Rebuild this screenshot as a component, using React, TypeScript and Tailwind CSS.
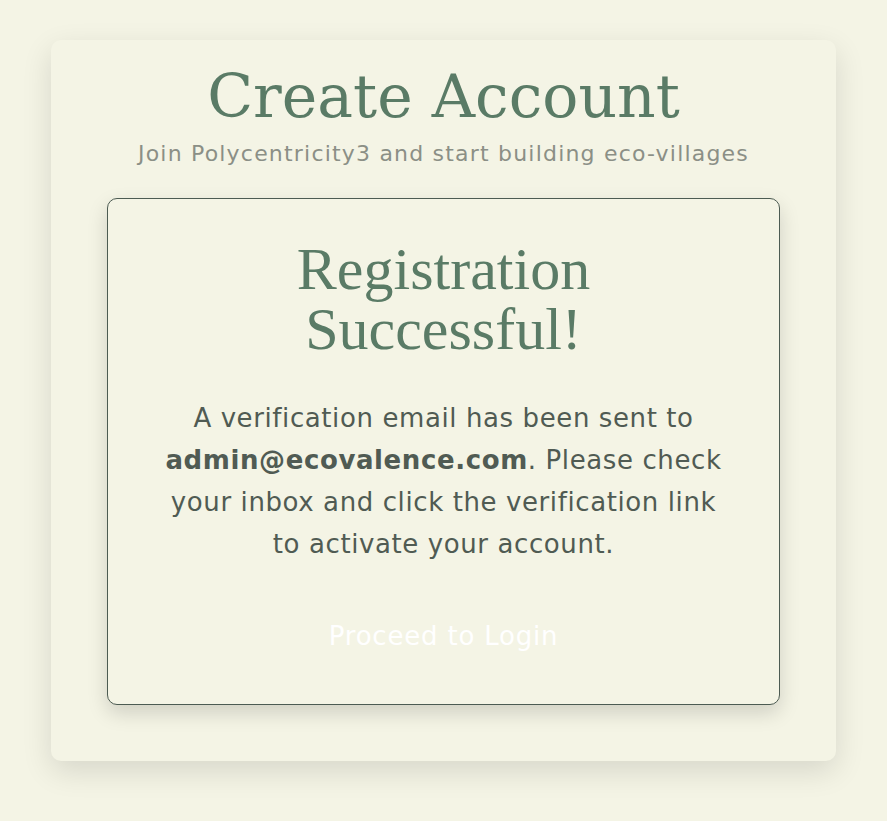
export default function App() {
  return (
    <div className="min-h-[821px] bg-[#f4f4e5] pt-[40px] font-['DejaVu_Sans',sans-serif]">
      <div className="mx-auto w-[785px] rounded-[10px] bg-[#f4f4e5] px-[56px] pt-[18px] pb-[56px] shadow-[0_10px_30px_rgba(0,0,0,0.12)]">
        {/* Header */}
        <h1 className="text-center font-['DejaVu_Serif',serif] text-[60px] leading-[76px] text-[#5a7b66]">
          Create Account
        </h1>
        <p className="mt-[5px] text-center text-[22px] leading-[30px] tracking-[1.2px] text-[#8b8f86]">
          Join Polycentricity3 and start building eco-villages
        </p>

        {/* Success card */}
        <div className="mt-[29px] rounded-[10px] border border-[#4c5b52] bg-[#f4f4e5] px-[40px] pt-[40px] pb-[41px] text-center shadow-[0_8px_20px_rgba(0,0,0,0.15)]">
          <h2 className="font-['Liberation_Serif',serif] text-[60px] leading-[60px] text-[#5a7b66]">
            Registration
            <br />
            Successful!
          </h2>
          <p className="mt-[38px] text-[26px] leading-[42px] tracking-[0.6px] text-[#505b53]">
            A verification email has been sent to
            <br />
            <strong className="font-bold">admin@ecovalence.com</strong>. Please check
            <br />
            your inbox and click the verification link
            <br />
            to activate your account.
          </p>
          <button className="mt-[44px] px-6 py-3 text-[26px] leading-[30px] tracking-[0.8px] text-white">
            Proceed to Login
          </button>
        </div>
      </div>
    </div>
  );
}
